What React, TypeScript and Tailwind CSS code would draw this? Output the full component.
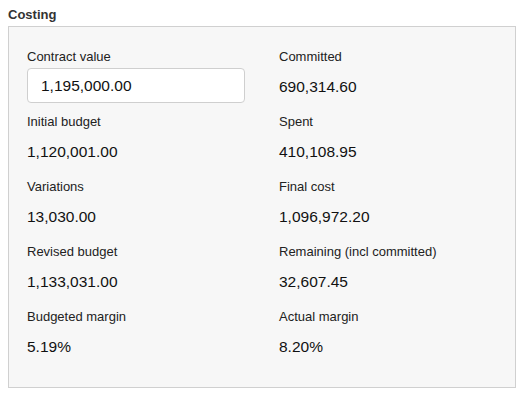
import React from 'react';

const rows = [
  { left: { label: 'Contract value', value: '1,195,000.00', input: true }, right: { label: 'Committed', value: '690,314.60' } },
  { left: { label: 'Initial budget', value: '1,120,001.00' }, right: { label: 'Spent', value: '410,108.95' } },
  { left: { label: 'Variations', value: '13,030.00' }, right: { label: 'Final cost', value: '1,096,972.20' } },
  { left: { label: 'Revised budget', value: '1,133,031.00' }, right: { label: 'Remaining (incl committed)', value: '32,607.45' } },
  { left: { label: 'Budgeted margin', value: '5.19%' }, right: { label: 'Actual margin', value: '8.20%' } },
];

type Field = { label: string; value: string; input?: boolean };

const Cell = ({ field }: { field: Field }) => (
  <div className="flex flex-col mb-[10px]">
    <div className="h-[18px] mb-[2px] flex items-center text-[13px] text-[#222]">{field.label}</div>
    {field.input ? (
      <input
        type="text"
        defaultValue={field.value}
        className="h-[35px] w-[218px] bg-white border border-[#cfcfcf] rounded-[4px] px-[13px] pt-[1px] text-[15.5px] text-[#111] outline-none"
      />
    ) : (
      <div className="h-[35px] pt-[2px] flex items-center text-[15.5px] text-[#111]">{field.value}</div>
    )}
  </div>
);

export default function App() {
  return (
    <div className="w-[522px] h-[399px] bg-white px-2 pt-[5px] font-['Liberation_Sans',Arial,sans-serif]">
      <h2 className="text-[13px] font-bold text-[#333] h-[20px] leading-[20px] mb-[1px]">Costing</h2>
      <div className="w-[508px] h-[362px] border border-[#d0d0d0] bg-[#f7f7f7] pl-[18px] pr-[18px] pt-[21px]">
        <div className="grid grid-cols-[252px_1fr]">
          {rows.map((r, i) => (
            <React.Fragment key={i}>
              <Cell field={r.left} />
              <Cell field={r.right} />
            </React.Fragment>
          ))}
        </div>
      </div>
    </div>
  );
}
